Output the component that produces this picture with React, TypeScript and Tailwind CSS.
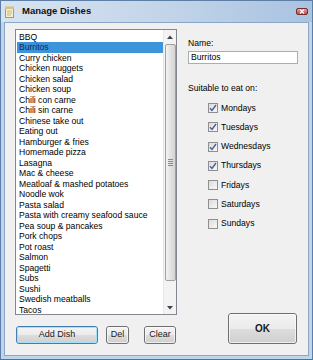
import React from 'react'

const dishes = [
  'BBQ', 'Burritos', 'Curry chicken', 'Chicken nuggets', 'Chicken salad', 'Chicken soup',
  'Chili con carne', 'Chili sin carne', 'Chinese take out', 'Eating out', 'Hamburger & fries',
  'Homemade pizza', 'Lasagna', 'Mac & cheese', 'Meatloaf & mashed potatoes', 'Noodle wok',
  'Pasta salad', 'Pasta with creamy seafood sauce', 'Pea soup & pancakes', 'Pork chops',
  'Pot roast', 'Salmon', 'Spagetti', 'Subs', 'Sushi', 'Swedish meatballs', 'Tacos',
]

const days = [
  { name: 'Mondays', on: true },
  { name: 'Tuesdays', on: true },
  { name: 'Wednesdays', on: true },
  { name: 'Thursdays', on: true },
  { name: 'Fridays', on: false },
  { name: 'Saturdays', on: false },
  { name: 'Sundays', on: false },
]

function VistaButton({ label, className = '', bold = false, focused = false }: { label: string; className?: string; bold?: boolean; focused?: boolean }){
  return (
    <button
      className={`flex items-center justify-center rounded-[3px] border ${focused ? 'border-[#3c7fb1]' : 'border-[#707070]'} bg-[linear-gradient(#f4f4f4_0%,#ebebeb_50%,#dddddd_51%,#cfcfcf_100%)] text-[#1a1a1a] ${bold ? 'font-bold' : ''} ${className}`}
    >
      <span className={`flex items-center justify-center w-full h-full rounded-[2px] border ${focused ? 'border-[#a6e0f8]' : 'border-[#fbfbfb]/70'}`}>{label}</span>
    </button>
  )
}

function CheckBox({ on }: { on: boolean }){
  return (
    <div className="w-[10px] h-[10px] border border-[#8f8f8f] bg-[linear-gradient(135deg,#dcdcdc,#f8f8f8)] flex items-center justify-center">
      {on && (
        <svg width="8" height="8" viewBox="0 0 8 8">
          <path d="M1 4.2 L3 6.4 L7 1" fill="none" stroke="#4a5f97" strokeWidth="1.4" />
        </svg>
      )}
    </div>
  )
}

export default function App(){
  return (
    <div className="w-[313px] h-[360px] flex flex-col bg-[#c2d4ea] border border-[#5d7fa6] border-b-[#2f7fa6] text-[8.6px] text-black" style={{ fontFamily: '"Liberation Sans", Arial, sans-serif' }}>
      {/* title bar */}
      <div className="h-[21px] flex items-center pl-[3px] pr-[4px] bg-[linear-gradient(90deg,#d7e3f0_0%,#c6d7ea_45%,#a9c3e1_100%)]">
        <svg width="11" height="12" viewBox="0 0 11 12">
          <rect x="1.5" y="1.5" width="8" height="10" fill="#f6efc9" stroke="#a89a6a" />
          <rect x="1" y="0.5" width="9" height="2.5" fill="#d8c27a" />
          <path d="M3 5h5M3 7h5M3 9h4" stroke="#b7ab85" strokeWidth="0.8" />
        </svg>
        <span className="ml-[7px] text-[9.5px] font-bold text-[#111]">Manage Dishes</span>
        <div className="flex-1" />
        <div className="w-[12px] h-[7px] rounded-[2px] border border-[#7a2c2c] bg-[linear-gradient(#e0a0a0,#c04848)] flex items-center justify-center mt-[-1px]">
          <svg width="6" height="5" viewBox="0 0 6 5">
            <path d="M1 0.5 L5 4.5 M5 0.5 L1 4.5" stroke="#fff" strokeWidth="1.1" />
          </svg>
        </div>
      </div>

      {/* client */}
      <div className="flex-1 mx-[3px] mb-[3px] border border-[#8aa6c8] bg-[#f0f0f0] flex pt-[6px] pl-[10px] pb-[11px]">
        <div className="w-[162px] flex flex-col">
          <div className="h-[286px] border border-[#828790] bg-white flex">
            <div className="flex-1 pt-[1.5px] pl-[1px] overflow-hidden">
              {dishes.map((d, i) => (
                <div
                  key={d}
                  className={`h-[10.5px] leading-[10.5px] pl-[2px] whitespace-nowrap ${i === 1 ? 'bg-[#3d94db] text-[#0d2a52]' : ''}`}
                >
                  {d}
                </div>
              ))}
            </div>
            {/* scrollbar */}
            <div className="w-[13px] bg-[#f3f3f3] border-l border-[#e8e8e8] flex flex-col items-center">
              <div className="h-[13px] w-full flex items-center justify-center">
                <svg width="6" height="4" viewBox="0 0 6 4"><path d="M0 4 L3 0.5 L6 4Z" fill="#444" /></svg>
              </div>
              <div className="mt-[1px] h-[237px] w-[11px] rounded-[2px] border border-[#a0a0a0] bg-[linear-gradient(90deg,#f4f4f4,#e2e2e2_50%,#d4d4d4)] flex flex-col items-center justify-center gap-[1px]">
                <div className="w-[5px] h-px bg-[#8a8a8a]" />
                <div className="w-[5px] h-px bg-[#8a8a8a]" />
                <div className="w-[5px] h-px bg-[#8a8a8a]" />
                <div className="w-[5px] h-px bg-[#8a8a8a]" />
              </div>
              <div className="flex-1" />
              <div className="h-[13px] w-full flex items-center justify-center">
                <svg width="6" height="4" viewBox="0 0 6 4"><path d="M0 0 L3 3.5 L6 0Z" fill="#444" /></svg>
              </div>
            </div>
          </div>
          <div className="mt-[11px] flex h-[18px] pl-[1px] text-[9px]">
            <VistaButton label="Add Dish" focused className="w-[82px] h-[18px]" />
            <VistaButton label="Del" className="ml-[8px] w-[23px] h-[18px]" />
            <VistaButton label="Clear" className="ml-[15px] w-[32px] h-[18px]" />
          </div>
        </div>

        <div className="ml-[11px] w-[110px] flex flex-col">
          <div className="mt-[9px] h-[10px] leading-[10px]">Name:</div>
          <div className="mt-[3px] h-[13px] border border-[#abadb3] bg-white pl-[2px] leading-[11px]">Burritos</div>
          <div className="mt-[19px] h-[10px] leading-[10px]">Suitable to eat on:</div>
          <div className="mt-[5.5px] flex flex-col pl-[20px]">
            {days.map(d => (
              <div key={d.name} className="h-[19.25px] flex items-center gap-[3px]">
                <CheckBox on={d.on} />
                <span>{d.name}</span>
              </div>
            ))}
          </div>
          <div className="flex-1" />
          <VistaButton label="OK" bold className="ml-[40px] w-[69px] h-[31px] text-[10px]" />
        </div>
      </div>
    </div>
  )
}
